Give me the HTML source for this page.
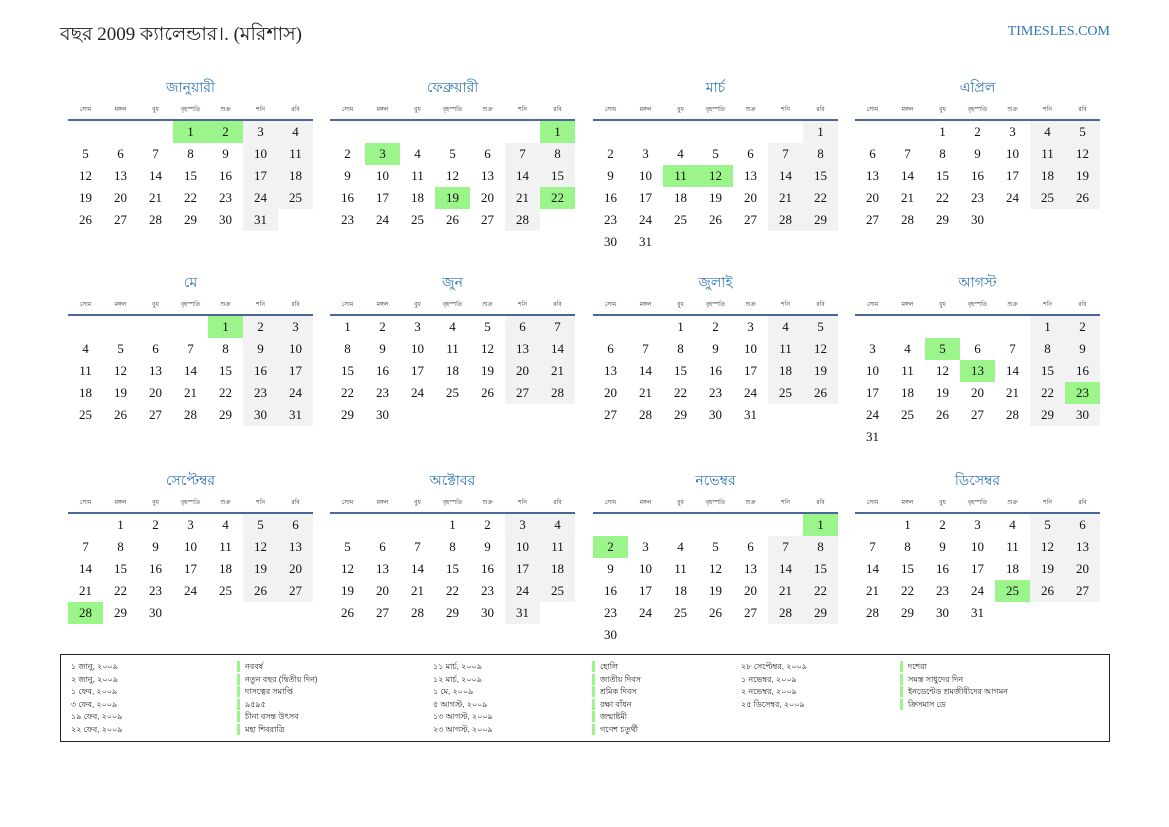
<!DOCTYPE html>
<html><head><meta charset="utf-8">
<style>
body{margin:0;width:1169px;height:827px;background:#fff;position:relative;font-family:"Liberation Serif",serif;overflow:hidden}
.h1{position:absolute;left:60px;top:20px;font-size:19px;color:#222;font-family:"Liberation Serif","Noto Sans CJK SC",serif}
.site{position:absolute;right:59px;top:24px;font-size:14px;color:#2f75b5}
.m{position:absolute;width:245px}
.t{position:absolute;top:-43px;width:245px;text-align:center;color:#2f75b5;font-size:14px;font-family:"Liberation Sans","Noto Sans CJK SC",sans-serif}
.wd{position:absolute;top:-15px;width:35px;text-align:center;font-size:6px;color:#333;font-family:"Liberation Sans","Noto Sans CJK SC",sans-serif}
.ln{position:absolute;top:0;left:0;width:245px;height:2px;background:#4a6896}
.c{position:absolute;width:35px;height:22px;line-height:22px;text-align:center;font-size:13px;color:#111}
.g{background:#f2f2f2}.h{background:#9cf58a}
.leg{position:absolute;left:60px;top:654px;width:1048px;height:86px;border:1px solid #222}
.l{position:absolute;font-size:8px;color:#222;white-space:nowrap;font-family:"Liberation Sans","Noto Sans CJK SC",sans-serif}
.b{border-left:3px solid #9cf58a;padding-left:5px}
</style></head><body>
<div class="h1">বছর 2009 ক্যালেন্ডার।. (মরিশাস)</div>
<div class="site">TIMESLES.COM</div>
<div id="cal"></div>
<div class="leg" id="leg"></div>
<script>
var names=["জানুয়ারী","ফেব্রুয়ারী","মার্চ","এপ্রিল","মে","জুন","জুলাই","আগস্ট","সেপ্টেম্বর","অক্টোবর","নভেম্বর","ডিসেম্বর"];
var wd=["সোম","মঙ্গল","বুধ","বৃহস্পতি","শুক্র","শনি","রবি"];
var off=[3,6,6,2,4,0,2,5,1,3,6,1],len=[31,28,31,30,31,30,31,31,30,31,30,31];
var hol={0:[1,2],1:[1,3,19,22],2:[11,12],4:[1],7:[5,13,23],8:[28],10:[1,2],11:[25]};
var xs=[68,330,593,855],ys=[119,314,512],html="";
for(var m=0;m<12;m++){
 var x=xs[m%4],y=ys[Math.floor(m/4)];
 html+='<div class="m" style="left:'+x+'px;top:'+y+'px"><div class="t">'+names[m]+'</div>';
 for(var i=0;i<7;i++)html+='<div class="wd" style="left:'+(i*35)+'px">'+wd[i]+'</div>';
 html+='<div class="ln"></div>';
 for(var d=1;d<=len[m];d++){
  var p=off[m]+d-1,c=p%7,r=Math.floor(p/7);
  var cls='c'+((hol[m]&&hol[m].indexOf(d)>=0)?' h':(c>=5?' g':''));
  html+='<div class="'+cls+'" style="left:'+(c*35)+'px;top:'+(2+r*22)+'px">'+d+'</div>';
 }
 html+='</div>';
}
document.getElementById('cal').innerHTML=html;
var cols=[
 [10,["১ জানু, ২০০৯","২ জানু, ২০০৯","১ ফেব, ২০০৯","৩ ফেব, ২০০৯","১৯ ফেব, ২০০৯","২২ ফেব, ২০০৯"],0],
 [176,["নববর্ষ","নতুন বছর (দ্বিতীয় দিন)","দাসত্বের সমাপ্তি","৯৫৯৫","চীনা বসন্ত উৎসব","মহা শিবরাত্রি"],1],
 [372,["১১ মার্চ, ২০০৯","১২ মার্চ, ২০০৯","১ মে, ২০০৯","৫ আগস্ট, ২০০৯","১৩ আগস্ট, ২০০৯","২৩ আগস্ট, ২০০৯"],0],
 [531,["হোলি","জাতীয় দিবস","শ্রমিক দিবস","রক্ষা বাঁধন","জন্মাষ্টমী","গণেশ চতুর্থী"],1],
 [680,["২৮ সেপ্টেম্বর, ২০০৯","১ নভেম্বর, ২০০৯","২ নভেম্বর, ২০০৯","২৫ ডিসেম্বর, ২০০৯"],0],
 [839,["দশেরা","সমস্ত সাধুদের দিন","ইনডেন্টেড শ্রমজীবীদের আগমন","ক্রিসমাস ডে"],1]];
var lh="";
cols.forEach(function(c){c[1].forEach(function(t,i){lh+='<div class="l'+(c[2]?' b':'')+'" style="left:'+c[0]+'px;top:'+(6+i*12.5)+'px;line-height:11px">'+t+'</div>';});});
document.getElementById('leg').innerHTML=lh;
</script>
</body></html>
